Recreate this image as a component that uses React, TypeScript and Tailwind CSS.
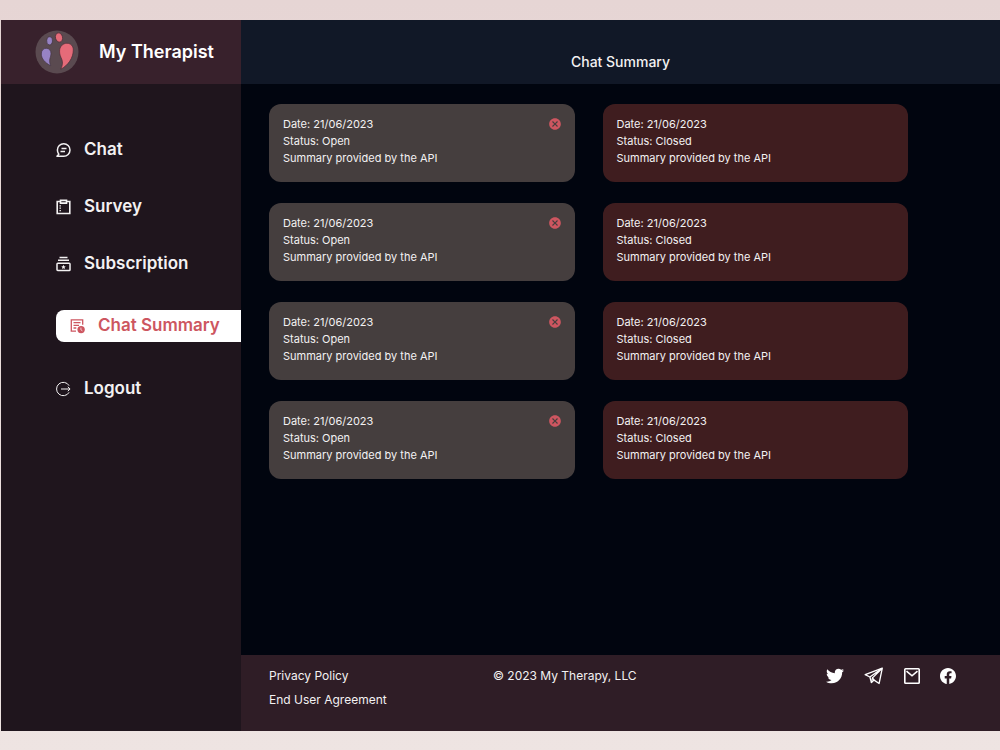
import type { ReactNode } from "react";
import clsx from "clsx";
import { FaTwitter } from "react-icons/fa";
import { BsFacebook } from "react-icons/bs";
import { MdCancel } from "react-icons/md";

type Summary = {
  id: number;
  date: string;
  status: "Open" | "Closed";
  text: string;
};

const SUMMARIES: Summary[] = Array.from({ length: 8 }, (_, i) => ({
  id: i,
  date: "21/06/2023",
  status: i % 2 === 0 ? "Open" : "Closed",
  text: "Summary provided by the API",
}));

function Logo() {
  return (
    <svg viewBox="0 0 44 44" className="size-11" aria-hidden="true">
      <circle cx="22" cy="22" r="21.5" fill="#5a4a50" />
      <g strokeWidth=".7">
        <ellipse cx="14.6" cy="10.8" rx="2.900" ry="4.100" fill="#9783c4" stroke="#42333f" transform="rotate(6 14.6 10.8)" />
        <ellipse cx="24" cy="7.500" rx="3.500" ry="4.700" fill="#e56b79" stroke="#4b2d37" transform="rotate(-14 24 7.5)" />
        <path
          d="M15.700 35.700C10 33 6.300 28.500 6.300 24c0-3.700 2.200-5.700 4.900-5.700 3 0 4.800 2.200 4.800 5.200 0 4-2.800 6-.3 12.200z"
          fill="#9783c4"
          stroke="#42333f"
        />
        <path
          d="M25.700 39.200c2.300-4.700 2.300-7.700.3-11.700-1.500-3.100-1.600-6-1.300-8 .7-3.800 3.700-6.200 7.200-6.200 3.800 0 6.400 2.700 6.400 6.700 0 8-5.300 15.500-12.600 19.200z"
          fill="#e56b79"
          stroke="#4b2d37"
        />
      </g>
    </svg>
  );
}

function ChatIcon() {
  return (
    <svg viewBox="0 0 16 16" className="size-4" fill="none" stroke="currentColor" strokeWidth="1.500" aria-hidden="true">
      <path d="M1 14.300h6.700A6.300 6.300 0 1 0 1.400 8c0 1.700.5 3 1.400 4.200z" strokeLinejoin="round" />
      <path d="M5.500 6.600h5M4.500 9.400H9" />
    </svg>
  );
}

function SurveyIcon() {
  return (
    <svg viewBox="0 0 16 16" className="size-4" fill="none" stroke="currentColor" strokeWidth="1.600" aria-hidden="true">
      <path d="M4.500 2.500H1.200v12h12.600v-12h-3.300" />
      <path d="M4.500 1.400h6v2.700h-6z" />
      <path d="M3.500 6.800h1.400M3.500 9.200h1.400M3.500 11.600h1.400" strokeWidth="1.200" />
    </svg>
  );
}

function SubscriptionIcon() {
  return (
    <svg viewBox="0 0 16 16" className="size-4" fill="none" stroke="currentColor" strokeWidth="1.500" aria-hidden="true">
      <path d="M3.500 1.500h8M2 4.300h11" />
      <rect x="1" y="7.200" width="13" height="7.300" rx=".8" />
      <path d="m7.500 8.700.7 1.500 1.500.2-1.100 1 .3 1.500-1.400-.7-1.400.7.3-1.500-1.100-1 1.500-.2z" fill="currentColor" stroke="none" />
    </svg>
  );
}

function SummaryIcon() {
  return (
    <svg viewBox="0 0 16 16" className="size-4" fill="none" stroke="currentColor" strokeWidth="1.300" aria-hidden="true">
      <path d="M6 13.200H1.300V1.800h11.400v5" />
      <path d="M3.500 4.700h7M3.500 7.400H9M3.500 10h2.800" />
      <circle cx="11.100" cy="11.600" r="3.700" fill="currentColor" stroke="none" />
      <path d="M10.900 9.600v2.200l1.500 1" stroke="#fff" strokeWidth=".7" />
    </svg>
  );
}

function LogoutIcon() {
  return (
    <svg viewBox="0 0 16 16" className="size-4" fill="none" stroke="currentColor" aria-hidden="true">
      <path d="M13.100 4.700a6.700 6.700 0 1 0 0 6.600" />
      <path d="M5 8h9M11.800 5.800 14.100 8l-2.300 2.200" />
    </svg>
  );
}

function TelegramIcon() {
  return (
    <svg viewBox="0 0 20 18" className="h-[18px] w-5" fill="none" stroke="currentColor" strokeWidth="1.300" strokeLinejoin="round" aria-hidden="true">
      <path d="M18.300 1.200 1.200 7.700l4.700 2.300 1.500 5.600 2.700-2.500 5 3.400z" />
      <path d="M18 1.400 5.900 10M18 1.500l-9.500 9.400 1.600 2.200M8.500 10.900l-1.100 4.700" />
    </svg>
  );
}

function MailIcon() {
  return (
    <svg viewBox="0 0 16 16" className="size-4" fill="none" stroke="currentColor" strokeWidth="1.600" aria-hidden="true">
      <rect x=".8" y=".8" width="14.400" height="14.400" rx=".8" />
      <path d="m2.500 3.200 5.500 4.600 5.500-4.600" />
    </svg>
  );
}

const NAV: { label: string; icon: ReactNode }[] = [
  { label: "Chat", icon: <ChatIcon /> },
  { label: "Survey", icon: <SurveyIcon /> },
  { label: "Subscription", icon: <SubscriptionIcon /> },
  { label: "Chat Summary", icon: <SummaryIcon /> },
  { label: "Logout", icon: <LogoutIcon /> },
];

const SOCIAL: { label: string; icon: ReactNode }[] = [
  { label: "Twitter", icon: <FaTwitter className="size-[18px]" /> },
  { label: "Telegram", icon: <TelegramIcon /> },
  { label: "Email", icon: <MailIcon /> },
  { label: "Facebook", icon: <BsFacebook className="size-4" /> },
];

function Sidebar({ current }: { current: string }) {
  return (
    <aside className="w-60 shrink-0 bg-[#1f151d]">
      <div className="flex h-16 items-center gap-5 bg-[#38212c] pl-[34px]">
        <Logo />
        <span className="text-lg font-semibold text-white">My Therapist</span>
      </div>
      <nav className="flex flex-col gap-[25px] pt-[50px] pl-[55px]">
        {NAV.map((item) => {
          const active = item.label === current;
          return (
            <a
              key={item.label}
              href="#"
              aria-current={active ? "page" : undefined}
              className={clsx(
                "flex h-8 items-center gap-3 text-[17px] font-semibold whitespace-nowrap",
                active && "mt-[5px] mb-[6px] rounded-l-lg bg-white pl-[14px] text-[#cd5660]",
              )}
            >
              {item.icon}
              {item.label}
            </a>
          );
        })}
      </nav>
    </aside>
  );
}

function SummaryCard({ item }: { item: Summary }) {
  const open = item.status === "Open";
  return (
    <article
      className={clsx(
        "flex items-start justify-between rounded-xl pt-3 pr-[13px] pb-[15px] pl-[14px] text-[11px] leading-[17px]",
        open ? "bg-[#453e3e]" : "bg-[#3f1d1f]",
      )}
    >
      <div>
        <p>Date: {item.date}</p>
        <p>Status: {item.status}</p>
        <p>{item.text}</p>
      </div>
      {open && (
        <button type="button" aria-label="Close chat" className="mt-px text-[#cd5660]">
          <MdCancel className="size-[14px]" />
        </button>
      )}
    </article>
  );
}

export default function App() {
  return (
    <div className="flex min-h-screen bg-linear-to-b from-[#e6d5d4] to-[#eee4e2] pt-5 pb-[19px] pl-px font-['Inter','Roboto',sans-serif] text-[#f3f1f2]">
      <Sidebar current="Chat Summary" />

      <div className="flex min-w-0 flex-1 flex-col bg-[#01050f]">
        <header className="flex h-16 justify-center bg-[#111827] pt-8">
          <h1 className="text-sm font-medium">Chat Summary</h1>
        </header>

        <main className="grid flex-1 grid-cols-2 content-start gap-x-7 gap-y-[21px] pt-5 pr-[92px] pl-7">
          {SUMMARIES.map((item) => (
            <SummaryCard key={item.id} item={item} />
          ))}
        </main>

        <footer className="grid grid-cols-[224px_1fr_auto] bg-[#2f1d26] pt-[9px] pr-11 pb-[19px] pl-7 text-xs leading-6">
          <div className="flex flex-col items-start">
            <a href="#">Privacy Policy</a>
            <a href="#">End User Agreement</a>
          </div>
          <p>© 2023 My Therapy, LLC</p>
          <div className="flex h-6 items-center gap-5 text-white">
            {SOCIAL.map((link) => (
              <a key={link.label} href="#" aria-label={link.label}>
                {link.icon}
              </a>
            ))}
          </div>
        </footer>
      </div>
    </div>
  );
}
